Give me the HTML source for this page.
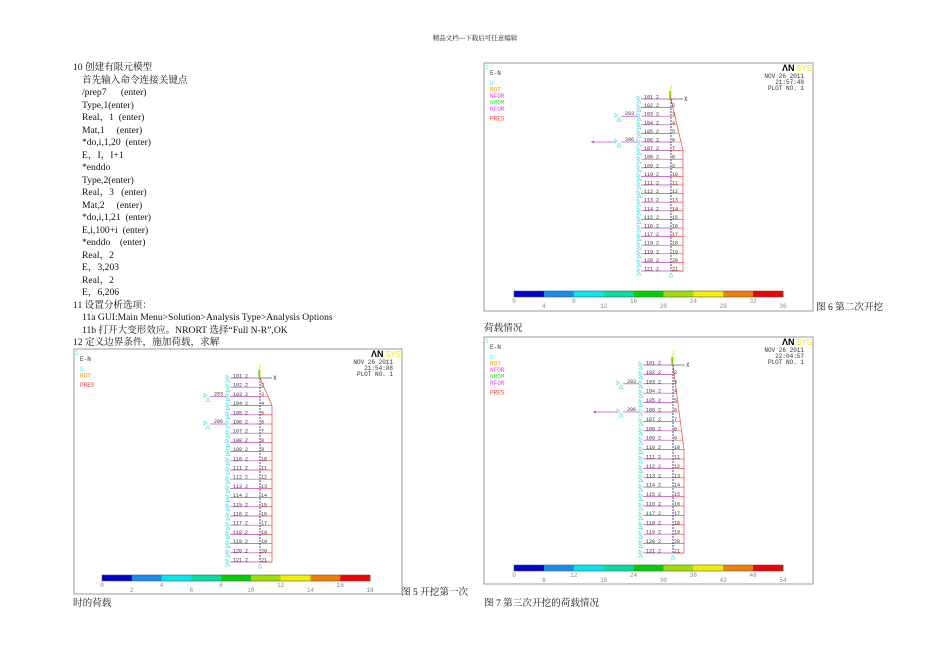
<!DOCTYPE html>
<html><head><meta charset="utf-8">
<style>
html,body{margin:0;padding:0;background:#fff;}
body{width:950px;height:672px;position:relative;overflow:hidden;font-family:"Liberation Serif","Noto Serif CJK SC",serif;color:#111;}
.t{position:absolute;font-size:9.6px;white-space:nowrap;line-height:12px;}
#hdr{position:absolute;left:0;width:950px;top:33px;text-align:center;font-size:6.5px;}
svg{position:absolute;left:0;top:0;}
</style></head><body>
<div id="hdr">精品文档---下载后可任意编辑</div>
<div id="txt"></div>
<svg id="sv" width="950" height="672" xmlns="http://www.w3.org/2000/svg" font-family="Liberation Mono, DejaVu Sans Mono, monospace"></svg>
<script>
var lines=[[73,"10 创建有限元模型"],[82,"首先输入命令连接关键点"],[82,"/prep7&nbsp;&nbsp;&nbsp;&nbsp;&nbsp; (enter)"],[82,"Type,1(enter)"],[82,"Real，1&nbsp; (enter)"],[82,"Mat,1&nbsp;&nbsp;&nbsp;&nbsp; (enter)"],[82,"*do,i,1,20&nbsp; (enter)"],[82,"E，I，I+1"],[82,"*enddo"],[82,"Type,2(enter)"],[82,"Real，3&nbsp;&nbsp; (enter)"],[82,"Mat,2&nbsp;&nbsp;&nbsp;&nbsp; (enter)"],[82,"*do,i,1,21&nbsp; (enter)"],[82,"E,i,100+i&nbsp; (enter)"],[82,"*enddo&nbsp;&nbsp;&nbsp; (enter)"],[82,"Real，2"],[82,"E，3,203"],[82,"Real，2"],[82,"E，6,206"],[73,"11 设置分析选项："],[82,"11a GUI:Main Menu&gt;Solution&gt;Analysis Type&gt;Analysis Options"],[82,"11b 打开大变形效应。NRORT 选择“Full N-R”,OK"],[73,"12 定义边界条件，施加荷载，求解"]];
var h="";
lines.forEach(function(l,i){h+='<div class="t" style="left:'+l[0]+'px;top:'+(62+i*12.5)+'px">'+l[1]+'</div>';});
h+='<div class="t" style="left:401px;top:587px">图 5 开挖第一次</div>';
h+='<div class="t" style="left:73px;top:598px">时的荷载</div>';
h+='<div class="t" style="left:816px;top:302px">图 6 第二次开挖</div>';
h+='<div class="t" style="left:484px;top:323px">荷载情况</div>';
h+='<div class="t" style="left:484px;top:598px">图 7 第三次开挖的荷载情况</div>';
document.getElementById("txt").innerHTML=h;

var cols=["#0000d0","#1a8cf0","#00e8f0","#00e0a0","#00d000","#a0e000","#f0f000","#f08000","#f00000"];
function plot(o){
 var s="";
 var x0=o.x0,y0=o.y0,x1=o.x1,y1=o.y1;
 s+='<rect x="'+x0+'" y="'+y0+'" width="'+(x1-x0)+'" height="'+(y1-y0)+'" fill="#fff" stroke="#999" stroke-width="1"/>';
 s+='<text x="'+(x0+1)+'" y="'+(y0+6)+'" font-size="6" fill="#4ee">1</text>';
 s+='<text x="'+(x0+6)+'" y="'+(y0+12)+'" font-size="6" fill="#333">E-N</text>';
 o.leg.forEach(function(l,i){s+='<text x="'+(x0+6)+'" y="'+(y0+22+i*6.5+(l[0]=="PRES"?3:0))+'" font-size="6" fill="'+l[1]+'">'+l[0]+'</text>';});
 s+='<text x="'+(x1-31)+'" y="'+(y0+8)+'" font-size="9" font-weight="bold" font-family="Liberation Sans,sans-serif" fill="#000">ΛN</text>';
 s+='<text x="'+(x1-17)+'" y="'+(y0+8)+'" font-size="8" font-family="Liberation Sans,sans-serif" fill="#ee0">SYS</text>';
 s+='<text x="'+(x1-9)+'" y="'+(y0+15)+'" font-size="6" fill="#333" text-anchor="end">NOV 26 2011</text>';
 s+='<text x="'+(x1-9)+'" y="'+(y0+21)+'" font-size="6" fill="#333" text-anchor="end">'+o.time+'</text>';
 s+='<text x="'+(x1-9)+'" y="'+(y0+27)+'" font-size="6" fill="#333" text-anchor="end">PLOT NO.   1</text>';
 var cx=o.cx,ry0=o.ry0,dy=o.dy,rx=o.rx;
 var ylast=ry0+20*dy,yk=ry0+(o.k-1)*dy;
 s+='<line x1="'+cx+'" y1="'+(ry0-12)+'" x2="'+cx+'" y2="'+ry0+'" stroke="#ee0"/>';
 s+='<line x1="'+(cx-1)+'" y1="'+(ry0-8)+'" x2="'+(cx-1)+'" y2="'+ry0+'" stroke="#0c0"/>';
 s+='<text x="'+(cx-1)+'" y="'+(ry0-11)+'" font-size="5" fill="#ee0">Y</text>';
 s+='<line x1="'+cx+'" y1="'+ry0+'" x2="'+(cx+12)+'" y2="'+ry0+'" stroke="#333" stroke-width=".6"/>';
 s+='<text x="'+(cx+13)+'" y="'+(ry0+2)+'" font-size="6" fill="#333">X</text>';
 var p="M"+cx+","+ry0+" L"+rx+","+yk+" L"+rx+","+ylast+" L"+cx+","+ylast;
 s+='<path d="'+p+'" fill="none" stroke="#e44" stroke-width=".7"/>';
 for(var i=0;i<21;i++){
  var y=ry0+i*dy;
  if(i>=o.k-1&&i>0) s+='<line x1="'+cx+'" y1="'+y+'" x2="'+rx+'" y2="'+y+'" stroke="#e44" stroke-width=".7"/>';
  else if(i>0){var xx=cx+(rx-cx)*i/(o.k-1);s+='<line x1="'+cx+'" y1="'+y+'" x2="'+xx+'" y2="'+y+'" stroke="#e44" stroke-width=".5"/>';}
  s+='<line x1="'+(cx-30)+'" y1="'+y+'" x2="'+cx+'" y2="'+y+'" stroke="#b4b" stroke-width=".7"/>';
  s+='<path d="M'+(cx-34)+','+(y-3)+' l3,2 l-3,2z M'+(cx-32)+','+(y+1)+' l-2,3 h4z" fill="none" stroke="#4dd" stroke-width=".6"/>';
  s+='<text x="'+(cx-27)+'" y="'+(y-0.5)+'" font-size="5" fill="#333">'+(101+i)+'  2</text>';
  if(i>0) s+='<text x="'+(cx+1)+'" y="'+(y-0.5)+'" font-size="5" fill="#333">'+(i+1)+'</text>';
 }
 s+='<line x1="'+cx+'" y1="'+ry0+'" x2="'+cx+'" y2="'+ylast+'" stroke="#226" stroke-width=".8" stroke-dasharray="2,1"/>';
 s+='<path d="M'+(cx-2)+','+(ylast+6)+' l2,-4 l2,4z" fill="none" stroke="#4dd" stroke-width=".6"/>';
 [[2,"203"],[5,"206"]].forEach(function(a,j){
  var y=ry0+a[0]*dy;
  s+='<line x1="'+(cx-50)+'" y1="'+y+'" x2="'+(cx-34)+'" y2="'+y+'" stroke="#b4b" stroke-width=".7"/>';
  s+='<text x="'+(cx-46)+'" y="'+(y-1)+'" font-size="5" fill="#333">'+a[1]+'</text>';
  s+='<path d="M'+(cx-56)+','+(y-3)+' l3,2 l-3,2z M'+(cx-52)+','+(y+1)+' l-2,4 h4z" fill="none" stroke="#4dd" stroke-width=".6"/>';
  if(j==1&&o.arrow) s+='<line x1="'+(cx-80)+'" y1="'+y+'" x2="'+(cx-56)+'" y2="'+y+'" stroke="#d4d" stroke-width=".8"/><path d="M'+(cx-80)+','+y+' l3,-1.5 v3z" fill="#d4d"/>';
 });
 var bx0=o.bx0,bx1=o.bx1,by=o.by,w=(bx1-bx0)/9;
 for(var i=0;i<9;i++) s+='<rect x="'+(bx0+i*w)+'" y="'+by+'" width="'+(w+.3)+'" height="6" fill="'+cols[i]+'"/>';
 s+='<rect x="'+bx0+'" y="'+by+'" width="'+(bx1-bx0)+'" height="6" fill="none" stroke="#555" stroke-width=".6"/>';
 for(var i=0;i<=9;i++) s+='<text x="'+(bx0+i*w)+'" y="'+(by+(i%2?17:12))+'" font-size="6" fill="#888" text-anchor="middle">'+(i*o.step)+'</text>';
 return s;
}
var L1=[["U","#4ee"],["ROT","#f90"],["PRES","#e44"]];
var L2=[["U","#4ee"],["ROT","#f90"],["NFOR","#e4e"],["NMOM","#4e4"],["RFOR","#d4e"],["PRES","#e44"]];
var svg="";
svg+=plot({x0:74,y0:349,x1:402,y1:594,cx:260,ry0:378,dy:9.2,rx:272,k:4,bx0:102,bx1:370,by:575,step:2,time:"21:54:08",leg:L1});
svg+=plot({x0:484,y0:63,x1:813,y1:311,cx:671,ry0:99,dy:8.6,rx:683,k:7,bx0:514,bx1:783,by:291,step:4,time:"21:57:48",leg:L2,arrow:1});
svg+=plot({x0:484,y0:337,x1:813,y1:584,cx:673,ry0:365,dy:9.4,rx:684,k:10,bx0:514,bx1:783,by:565,step:6,time:"22:04:57",leg:L2,arrow:1});
document.getElementById("sv").innerHTML=svg;
</script>
</body></html>
